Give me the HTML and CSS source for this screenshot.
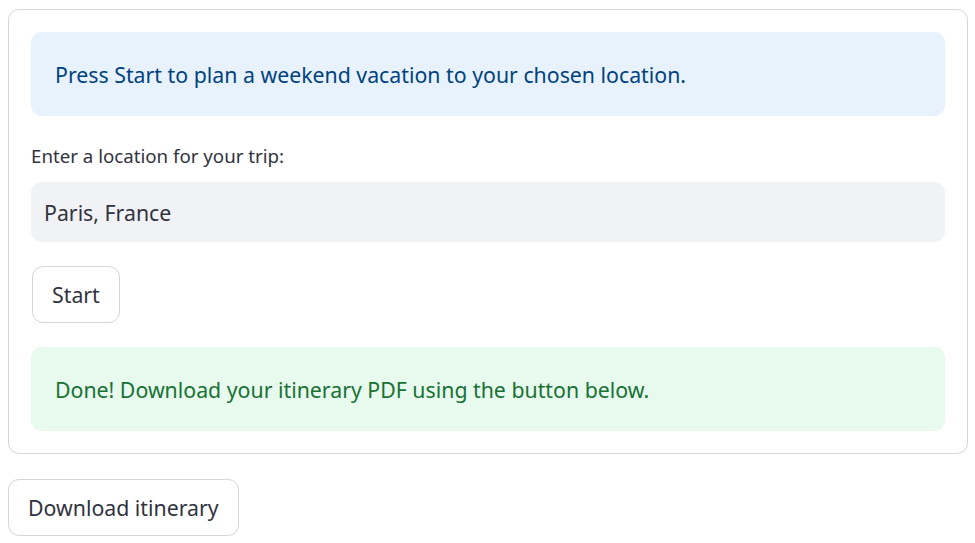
FILE: index.html
```html
<!DOCTYPE html>
<html lang="en">
<head>
<meta charset="utf-8">
<title>Weekend trip planner</title>
<link rel="stylesheet" href="styles.css">
</head>
<body>
<main class="page">
  <form class="form" onsubmit="return false">
    <div class="alert alert-info">Press Start to plan a weekend vacation to your chosen location.</div>
    <div class="field">
      <label class="label" for="loc">Enter a location for your trip:</label>
      <input class="input" id="loc" type="text" value="Paris, France">
    </div>
    <div class="row"><button class="btn" type="button">Start</button></div>
    <div class="alert alert-success">Done! Download your itinerary PDF using the button below.</div>
  </form>
  <div class="row"><button class="btn" type="button">Download itinerary</button></div>
</main>
</body>
</html>
```
FILE: styles.css
```css
* { box-sizing: border-box; }
html, body { margin: 0; padding: 0; background: #ffffff; }
body {
  font-family: "Noto Sans", "Open Sans", sans-serif;
  color: #31333f;
}
.page {
  padding: 9px 7px 0 8px;
  display: flex;
  flex-direction: column;
  gap: 25px;
  align-items: stretch;
}
.form {
  border: 1px solid #d6d6d9;
  border-radius: 11px;
  padding: 22px 22px 22px 22px;
  display: flex;
  flex-direction: column;
  gap: 24px;
  margin: 0;
}
.alert {
  border-radius: 11px;
  height: 84px;
  padding: 0 24px;
  display: flex;
  align-items: center;
  font-size: 21.3px;
}
.alert-info { background: #e8f2fc; color: #004280; }
.alert-success { background: #e8f9ee; color: #177233; }
.field { display: flex; flex-direction: column; gap: 10px; }
.label {
  font-size: 18.7px;
  line-height: 32px;
  color: #31333f;
}
.input {
  height: 60px;
  border: none;
  border-radius: 11px;
  background: #f0f2f6;
  padding: 0 13px;
  font-family: inherit;
  font-size: 21.3px;
  color: #31333f;
  outline: none;
}
.row { display: flex; }
.btn {
  height: 57px;
  padding: 0 19px;
  background: #ffffff;
  border: 1px solid #d6d6d9;
  border-radius: 11px;
  font-family: inherit;
  font-size: 21.3px;
  color: #31333f;
  cursor: pointer;
}
.form .row .btn { margin-left: 1px; }
```
